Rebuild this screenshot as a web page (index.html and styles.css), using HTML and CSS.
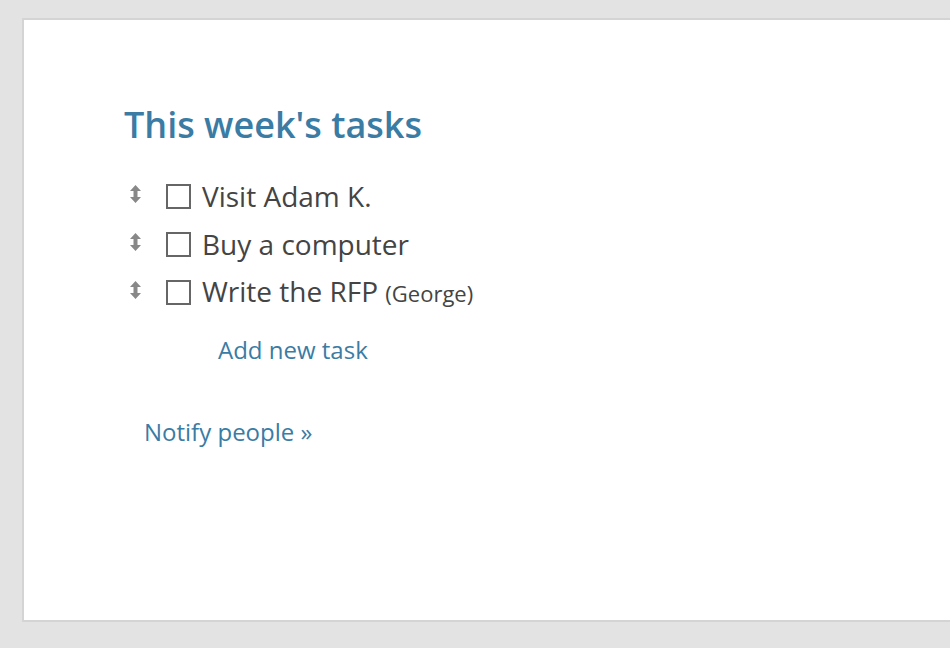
FILE: index.html
```html
<!DOCTYPE html>
<html>
<head>
<meta charset="utf-8">
<link rel="stylesheet" href="styles.css">
</head>
<body>
<div class="card">
  <h1 class="title">This week's tasks</h1>
  <ul class="tasks">
    <li class="task">
      <svg class="drag" width="11" height="18" viewBox="0 0 11 18"><path d="M5.5 0 L11 6 L7.5 6 L7.5 12 L11 12 L5.5 18 L0 12 L3.5 12 L3.5 6 L0 6 Z" fill="#888"/></svg>
      <span class="box"></span>
      <span class="label">Visit Adam K.</span>
    </li>
    <li class="task">
      <svg class="drag" width="11" height="18" viewBox="0 0 11 18"><path d="M5.5 0 L11 6 L7.5 6 L7.5 12 L11 12 L5.5 18 L0 12 L3.5 12 L3.5 6 L0 6 Z" fill="#888"/></svg>
      <span class="box"></span>
      <span class="label">Buy a computer</span>
    </li>
    <li class="task">
      <svg class="drag" width="11" height="18" viewBox="0 0 11 18"><path d="M5.5 0 L11 6 L7.5 6 L7.5 12 L11 12 L5.5 18 L0 12 L3.5 12 L3.5 6 L0 6 Z" fill="#888"/></svg>
      <span class="box"></span>
      <span class="label">Write the RFP <small class="who">(George)</small></span>
    </li>
  </ul>
  <a class="add" href="#">Add new task</a>
  <a class="notify" href="#">Notify people »</a>
</div>
</body>
</html>
```
FILE: styles.css
```css
html, body {
  margin: 0;
  padding: 0;
  background: #e3e3e3;
  overflow: hidden;
  font-family: "Open Sans", "Noto Sans", sans-serif;
}
.card {
  margin: 18px 0 0 22px;
  width: 1000px;
  height: 600px;
  background: #fff;
  border: 2px solid #d4d4d4;
  padding: 0 0 0 100px;
  box-sizing: content-box;
  display: flex;
  flex-direction: column;
  align-items: flex-start;
}
.title {
  margin: 83px 0 0 0;
  font-size: 36px;
  font-weight: 600;
  color: #3a7ca4;
  line-height: 44px;
}
.tasks {
  list-style: none;
  margin: 25px 0 0 0;
  padding: 0;
}
.task {
  display: flex;
  align-items: center;
  height: 48px;
  color: #444;
}
.drag {
  margin: 0 0 0 6px;
  position: relative;
  top: -2px;
}
.box {
  width: 21px;
  height: 21px;
  border: 2px solid #666;
  margin-left: 25px;
}
.label {
  margin-left: 11px;
  font-size: 28px;
  line-height: 48px;
}
.who {
  font-size: 22px;
}
.add {
  margin: 18px 0 0 94px;
  font-size: 24px;
  line-height: 32px;
  color: #3a7ca4;
  text-decoration: none;
}
.notify {
  margin: 50px 0 0 20px;
  font-size: 24px;
  line-height: 32px;
  color: #3a7ca4;
  text-decoration: none;
}
```
